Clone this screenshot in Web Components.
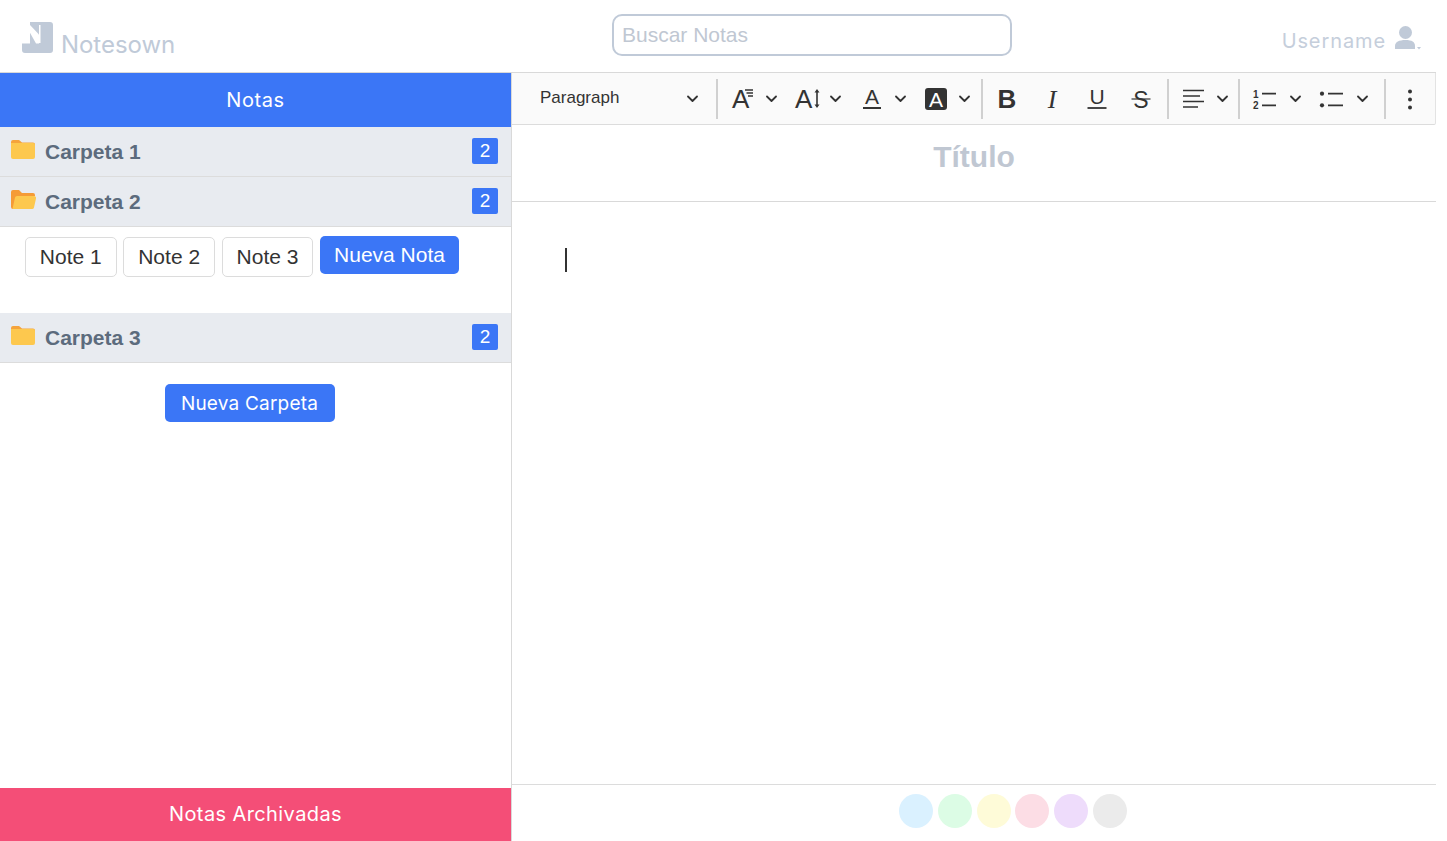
<!DOCTYPE html>
<html lang="es">
<head>
<meta charset="utf-8">
<title>Notesown</title>
<style>
  html, body { margin: 0; height: 100%; background: #fff; }
  body { font-family: "Liberation Sans", sans-serif; overflow: hidden; }
</style>
</head>
<body>
<notes-app></notes-app>

<script>
const BRAND_FONT = `Inter, "Open Sans", sans-serif`;
const SANS = `"Liberation Sans", Arial, sans-serif`;

const ICONS = {
  fontSize: `<text x="4" y="23" font-size="26" class="t">A</text><path d="M17 5h8M18.500 8h6.500M20 11h5" class="l" stroke-width="1.400"/>`,
  lineHeight: `<text x="2" y="23" font-size="26" class="t">A</text><path d="M24 6v15" class="l" stroke-width="1.600"/><path d="M21.500 7.500 24 4l2.500 3.500zM21.500 19.500 24 23l2.500-3.500z" class="f"/>`,
  fontColor: `<text x="7" y="19" font-size="21" class="t">A</text><path d="M5 23h18" class="l" stroke-width="2"/>`,
  fontBg: `<rect x="3" y="3" width="22" height="22" rx="3" class="f"/><text x="7" y="21.500" font-size="21" fill="#fff">A</text>`,
  bold: `<text x="14" y="23" font-size="26" font-weight="700" text-anchor="middle" class="t">B</text>`,
  italic: `<text x="14" y="23" font-size="26" font-style="italic" text-anchor="middle" class="t" font-family="Liberation Serif">I</text>`,
  underline: `<text x="14" y="19" font-size="21" text-anchor="middle" class="t">U</text><path d="M4.500 23h19" class="l" stroke-width="1.800"/>`,
  strike: `<text x="14" y="22.500" font-size="23" text-anchor="middle" class="t">S</text><path d="M4.500 14h19" class="l" stroke-width="1.200"/>`,
  align: `<path d="M4 5.500h21M4 11h17M4 16.500h21M4 22h15" class="l" stroke-width="1.700"/>`,
  numbered: `<text x="3" y="12.500" font-size="10" font-weight="700" class="t">1</text><text x="3" y="24" font-size="10" font-weight="700" class="t">2</text><path d="M12 8.700h14M12 20.300h14" class="l" stroke-width="1.800"/>`,
  bulleted: `<circle cx="5" cy="8.700" r="2.100" class="f"/><circle cx="5" cy="20.300" r="2.100" class="f"/><path d="M11 8.700h15M11 20.300h15" class="l" stroke-width="1.800"/>`,
  dots: `<circle cx="14" cy="6.500" r="2" class="f"/><circle cx="14" cy="14.500" r="2" class="f"/><circle cx="14" cy="22.500" r="2" class="f"/>`
};

const CHEVRON = `<svg width="11" height="8" viewBox="0 0 11 8"><path d="M1 1.500 5.500 6 10 1.500" fill="none" stroke="#333" stroke-width="1.800" stroke-linecap="round" stroke-linejoin="round"/></svg>`;

class TopBar extends HTMLElement {
  constructor() {
    super();
    this.attachShadow({ mode: "open" });
    this.shadowRoot.innerHTML = /* html */`
    <style>
      :host {
        display: grid;
        grid-template-columns: 612px 400px 1fr;
        align-items: center;
        height: 72px;
        border-bottom: 1px solid #d9d9d9;
      }
      .brand { display: flex; align-items: flex-end; padding-left: 22px; gap: 8px; height: 32px; margin-top: 2px; }
      .brand svg { display: block; }
      .brand span { font: 400 24px/24px ${BRAND_FONT}; color: #c0cad8; letter-spacing: -0.05px; margin-bottom: -4px; }
      input {
        box-sizing: border-box;
        width: 400px;
        height: 42px;
        border: 2px solid #c0cad8;
        border-radius: 10px;
        padding: 0 8px;
        font: 21px ${SANS};
        outline: none;
        margin-top: -2px;
      }
      input::placeholder { color: #c0c7d2; opacity: 1; }
      .user { display: flex; justify-content: flex-end; align-items: center; gap: 9px; padding-right: 14px; margin-top: 10px; }
      .user span { font: 400 20px/26px ${BRAND_FONT}; color: #c5cedb; letter-spacing: 0.9px; }
      .user svg { margin-top: -7px; display: block; }
    </style>
    <div class="brand">
      <svg width="31" height="31" viewBox="0 0 31 31">
        <path fill="#c0cad8" d="M8 0h20a3 3 0 0 1 3 3v25a3 3 0 0 1-3 3H3a3 3 0 0 1-3-3v-6.500h8z"/>
        <path fill="#fff" d="M5 5.500 8 3l9 9.500V21.500H14z"/>
        <path fill="#fff" d="M17 3h1.500v18H17z"/>
      </svg>
      <span>Notesown</span>
    </div>
    <input type="text" placeholder="Buscar Notas">
    <div class="user">
      <span>Username</span>
      <svg width="27" height="24" viewBox="0 0 27 24">
        <circle cx="10.500" cy="6.500" r="6.500" fill="#c0cad8"/>
        <path d="M0 23v-3c0-4 4-6 10.500-6S20 16 20 20v3z" fill="#c0cad8"/>
        <path d="M22 21h4l-2 2.500z" fill="#c0cad8"/>
      </svg>
    </div>`;
  }
}

class FolderRow extends HTMLElement {
  constructor() {
    super();
    this.attachShadow({ mode: "open" });
  }

  connectedCallback() {
    const open = this.hasAttribute("open");
    const icon = open
      ? `<path d="M0 2a2 2 0 0 1 2-2h6l3 3h11a2 2 0 0 1 2 2v1H0zM0 4h9v15H2a2 2 0 0 1-2-2z" fill="#f59b36"/><path d="M4 7.500a2 2 0 0 1 1.900-1.500H23a2 2 0 0 1 2 2.500l-2 9a2 2 0 0 1-2 1.500H1.500z" fill="#fdc84e"/>`
      : `<path d="M0 2a2 2 0 0 1 2-2h6l3 2.500h11a2 2 0 0 1 2 2V5H0z" fill="#f5a43c"/><path d="M0 3h22a2 2 0 0 1 2 2v12a2 2 0 0 1-2 2H2a2 2 0 0 1-2-2z" fill="#fdc84e"/>`;
    this.shadowRoot.innerHTML = /* html */`
    <style>
      :host {
        display: flex;
        align-items: center;
        box-sizing: border-box;
        height: 50px;
        padding: 0 13px 0 11px;
        background: #e8ebf0;
        border-bottom: 1px solid #dcdcdc;
      }
      svg { display: block; margin-top: -4px; }
      .name { flex: 1; margin-left: 9px; font: 700 21px/24px ${SANS}; color: #5c6b7d; }
      .badge {
        width: 26px;
        height: 26px;
        border-radius: 2px;
        background: #3b76f6;
        color: #fff;
        font: 19px/26px ${SANS};
        text-align: center;
        margin-top: -2px;
      }
    </style>
    <svg width="25" height="20" viewBox="0 0 25 20">${icon}</svg>
    <span class="name"><slot></slot></span>
    <span class="badge">${this.getAttribute("count")}</span>`;
  }
}

class NoteChip extends HTMLElement {
  constructor() {
    super();
    this.attachShadow({ mode: "open" });
    this.shadowRoot.innerHTML = /* html */`
    <style>
      :host {
        display: block;
        box-sizing: border-box;
        height: 40px;
        margin-top: 1px;
        padding: 0 13.850px;
        border: 1px solid #dcdcdc;
        border-radius: 5px;
        background: #fff;
        color: #333;
        font: 21px/38px ${SANS};
        white-space: nowrap;
      }
      :host([primary]) {
        height: 38px;
        margin-top: 0;
        padding: 0 14px;
        border: 0;
        background: #3b76f6;
        color: #fff;
        line-height: 37px;
      }
    </style>
    <slot></slot>`;
  }
}

class SidePanel extends HTMLElement {
  constructor() {
    super();
    this.attachShadow({ mode: "open" });
    this.shadowRoot.innerHTML = /* html */`
    <style>
      :host {
        display: flex;
        flex-direction: column;
        box-sizing: border-box;
        width: 512px;
        border-right: 1px solid #d9d9d9;
      }
      .bar {
        height: 54px;
        background: #3b76f6;
        color: #fff;
        font: 400 20px/54px ${BRAND_FONT};
        letter-spacing: 0.6px;
        text-align: center;
      }
      .notes { display: flex; gap: 6.800px; height: 86px; box-sizing: border-box; padding: 9px 25px 0; }
      .add { display: flex; justify-content: center; padding: 21px 12px 0 0; }
      .add div {
        width: 170px;
        height: 38px;
        border-radius: 5px;
        background: #3b76f6;
        color: #fff;
        font: 400 19px/40px ${BRAND_FONT};
        letter-spacing: 0.2px;
        text-align: center;
      }
      .archive {
        margin-top: auto;
        height: 53px;
        background: #f44e77;
        color: #fff;
        font: 400 20px/53px ${BRAND_FONT};
        letter-spacing: 0.4px;
        text-align: center;
      }
    </style>
    <div class="bar">Notas</div>
    <folder-row count="2">Carpeta 1</folder-row>
    <folder-row count="2" open>Carpeta 2</folder-row>
    <div class="notes">
      <note-chip>Note 1</note-chip>
      <note-chip>Note 2</note-chip>
      <note-chip>Note 3</note-chip>
      <note-chip primary>Nueva Nota</note-chip>
    </div>
    <folder-row count="2">Carpeta 3</folder-row>
    <div class="add"><div>Nueva Carpeta</div></div>
    <div class="archive">Notas Archivadas</div>`;
  }
}

class ToolItem extends HTMLElement {
  constructor() {
    super();
    this.attachShadow({ mode: "open" });
  }

  connectedCallback() {
    const name = this.getAttribute("icon");
    const drop = this.hasAttribute("drop");
    this.shadowRoot.innerHTML = /* html */`
    <style>
      :host {
        display: flex;
        align-items: center;
        flex: none;
        box-sizing: border-box;
        width: ${this.getAttribute("w")}px;
        padding-left: ${this.getAttribute("pad")}px;
        gap: ${this.getAttribute("gap") || 0}px;
      }
      svg { display: block; flex: none; }
      .t { fill: #333; font-family: ${SANS}; }
      text { font-family: "Liberation Sans", sans-serif; }
      text[font-family] { font-family: "Liberation Serif", serif; }
      .l { stroke: #333; fill: none; }
      .f { fill: #333; }
    </style>
    <svg width="28" height="28" viewBox="0 0 28 28">${ICONS[name]}</svg>
    ${drop ? CHEVRON : ""}`;
  }
}

class EditorToolbar extends HTMLElement {
  constructor() {
    super();
    this.attachShadow({ mode: "open" });
    this.shadowRoot.innerHTML = /* html */`
    <style>
      :host {
        display: flex;
        align-items: center;
        box-sizing: border-box;
        height: 52px;
        background: #fafafa;
        border-bottom: 1px solid #dcdcdc;
        border-right: 1px solid #e3e3e3;
        border-bottom-right-radius: 2px;
      }
      .para {
        display: flex;
        align-items: center;
        justify-content: space-between;
        box-sizing: border-box;
        width: 204px;
        flex: none;
        padding: 0 18px 0 28px;
        color: #333;
        font: 17px/20px ${SANS};
      }
      .para span { margin-top: -2px; }
      i { display: block; flex: none; width: 2px; height: 40px; background: #d0d0d0; }
    </style>
    <div class="para"><span>Paragraph</span>${CHEVRON}</div>
    <i></i>
    <tool-item icon="fontSize" drop w="64" pad="10" gap="10"></tool-item>
    <tool-item icon="lineHeight" drop w="64" pad="11" gap="9"></tool-item>
    <tool-item icon="fontColor" drop w="64" pad="12" gap="9"></tool-item>
    <tool-item icon="fontBg" drop w="71" pad="12" gap="9"></tool-item>
    <i></i>
    <tool-item icon="bold" w="45" pad="10"></tool-item>
    <tool-item icon="italic" w="45" pad="10"></tool-item>
    <tool-item icon="underline" w="44" pad="10"></tool-item>
    <tool-item icon="strike" w="50" pad="10"></tool-item>
    <i></i>
    <tool-item icon="align" drop w="69" pad="10" gap="10"></tool-item>
    <i></i>
    <tool-item icon="numbered" drop w="72" pad="10" gap="12"></tool-item>
    <tool-item icon="bulleted" drop w="72" pad="5" gap="12"></tool-item>
    <i></i>
    <tool-item icon="dots" w="50" pad="10"></tool-item>`;
  }
}

class ColorDots extends HTMLElement {
  constructor() {
    super();
    this.attachShadow({ mode: "open" });
    const colors = ["#daf1ff", "#dcfce5", "#fefbd8", "#fcdde5", "#eedcfb", "#ebebeb"];
    this.shadowRoot.innerHTML = /* html */`
    <style>
      :host {
        display: flex;
        justify-content: center;
        gap: 4.800px;
        box-sizing: border-box;
        height: 57px;
        padding: 9px 0 0 78px;
        border-top: 1px solid #dcdcdc;
      }
      span { width: 34px; height: 34px; border-radius: 50%; }
    </style>
    ${colors.map(c => `<span style="background:${c}"></span>`).join("")}`;
  }
}

class NoteEditor extends HTMLElement {
  constructor() {
    super();
    this.attachShadow({ mode: "open" });
    this.shadowRoot.innerHTML = /* html */`
    <style>
      :host { display: flex; flex-direction: column; flex: 1; min-width: 0; }
      .title {
        box-sizing: border-box;
        height: 77px;
        padding-top: 15px;
        border-bottom: 1px solid #d9d9d9;
        color: #c0c7d2;
        font: 700 30px/34px ${SANS};
        text-align: center;
      }
      .body { flex: 1; padding: 46px 0 0 53px; }
      .caret { width: 2px; height: 24px; background: #333; }
    </style>
    <editor-toolbar></editor-toolbar>
    <div class="title">Título</div>
    <div class="body"><div class="caret"></div></div>
    <color-dots></color-dots>`;
  }
}

class NotesApp extends HTMLElement {
  constructor() {
    super();
    this.attachShadow({ mode: "open" });
    this.shadowRoot.innerHTML = /* html */`
    <style>
      :host { display: flex; flex-direction: column; width: 1436px; height: 841px; }
      .main { display: flex; flex: 1; min-height: 0; }
    </style>
    <top-bar></top-bar>
    <div class="main">
      <side-panel></side-panel>
      <note-editor></note-editor>
    </div>`;
  }
}

customElements.define("top-bar", TopBar);
customElements.define("folder-row", FolderRow);
customElements.define("note-chip", NoteChip);
customElements.define("side-panel", SidePanel);
customElements.define("tool-item", ToolItem);
customElements.define("editor-toolbar", EditorToolbar);
customElements.define("color-dots", ColorDots);
customElements.define("note-editor", NoteEditor);
customElements.define("notes-app", NotesApp);
</script>
</body>
</html>
